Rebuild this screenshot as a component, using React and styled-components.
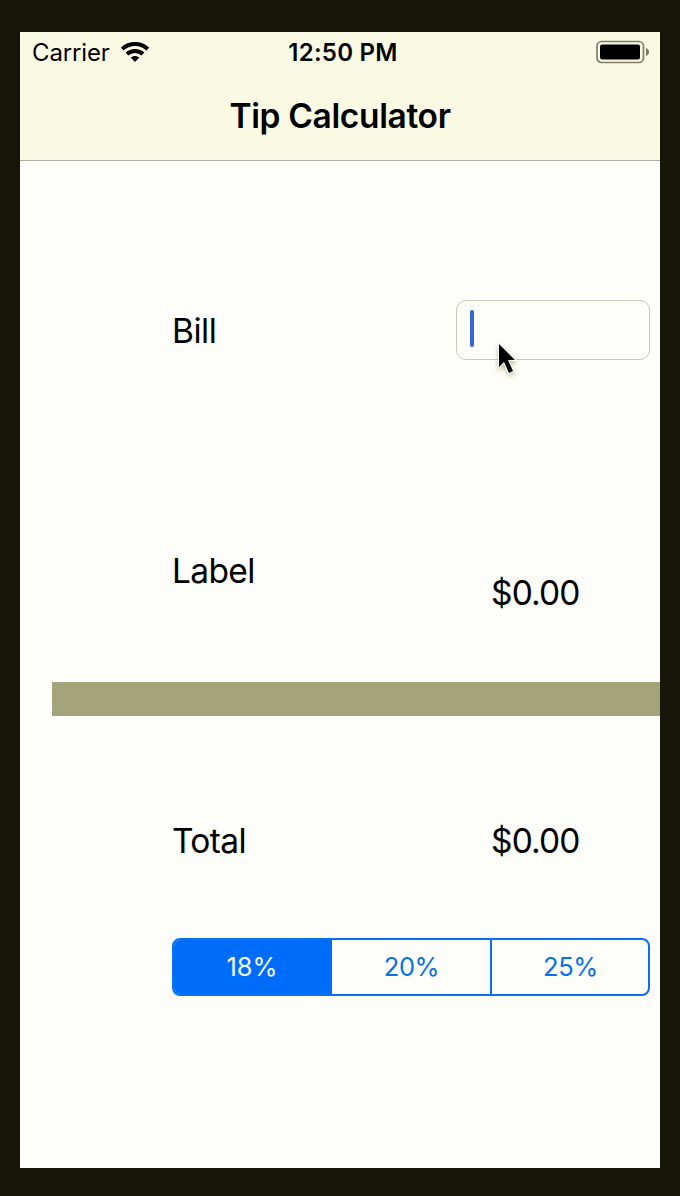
import React from "react";
import styled, { createGlobalStyle } from "styled-components";

const GlobalStyle = createGlobalStyle`
  * { box-sizing: border-box; }
  body { margin: 0; background: #171609; font-family: Inter, "Liberation Sans", sans-serif; }
`;

const Backdrop = styled.div`
  height: 1196px;
  padding: 32px 20px 28px;
  background: #171609;
`;

const Screen = styled.main`
  display: flex;
  flex-direction: column;
  height: 1136px;
  background: #fdfdf9;
  color: #000;
  overflow: hidden;
`;

const Header = styled.header`
  height: 129px;
  flex: none;
  background: #f9f9e4;
  border-bottom: 1px solid #adada0;
`;

const StatusBar = styled.div`
  display: grid;
  grid-template-columns: 1fr auto 1fr;
  align-items: center;
  height: 40px;
  padding: 0 10px 0 12px;
  font-size: 24px;
  line-height: 40px;
`;

const Carrier = styled.div`
  display: flex;
  align-items: center;
  gap: 11px;
`;

const Fit = styled.span`
  display: block;
  white-space: nowrap;
  letter-spacing: ${(p) => p.$spacing || 0}px;
`;

const StatusText = styled(Fit)`
  line-height: 38px;
  padding-top: 2px;
`;

const Clock = styled(StatusText)`
  font-weight: 600;
  padding-left: 4px;
`;

const Battery = styled.svg`
  justify-self: end;
  display: block;
`;

const Title = styled.h1`
  margin: 0;
  padding-top: 23px;
  text-align: center;
  font-size: 33.5px;
  line-height: 43px;
  font-weight: 600;
  letter-spacing: -0.35px;
`;

const Row = styled.div`
  display: grid;
  grid-template-columns: ${(p) => p.$left || 319}px 1fr;
  align-items: start;
  padding: 0 10px 0 152px;
  margin-top: ${(p) => p.$top}px;
  height: 60px;
  flex: none;
  font-size: 33.5px;
  line-height: 62px;
`;

const Amount = styled(Fit)`
  padding-top: ${(p) => p.$drop || 0}px;
`;

const BillField = styled.div`
  position: relative;
  height: 60px;
  padding: 9px 13px;
  border: 1px solid #c9c9b6;
  border-radius: 10px;
`;

const Caret = styled.div`
  width: 4px;
  height: 37px;
  border-radius: 2px;
  background: #3565d9;
`;

const Pointer = styled.svg`
  position: absolute;
  left: 38px;
  top: 40px;
  filter: drop-shadow(0 2px 2px rgba(110, 110, 20, 0.45));
`;

const Divider = styled.div`
  flex: none;
  height: 34px;
  margin: 82px 0 0 32px;
  background: #a3a37c;
`;

const Segments = styled.div`
  display: grid;
  grid-template-columns: 158px 158px 1fr;
  flex: none;
  height: 58px;
  margin: 68px 10px 0 152px;
  border: 2px solid #0a70f2;
  border-radius: 8px;
  overflow: hidden;
`;

const Segment = styled.button`
  border: 0;
  border-left: ${(p) => (p.$divided ? "2px solid #0a70f2" : "0")};
  padding: ${(p) => (p.$active ? "0 2px 0 0" : "0 0 0 1px")};
  background: ${(p) => (p.$active ? "#006dfa" : "transparent")};
  color: ${(p) => (p.$active ? "#f4f8f2" : "#0a70e8")};
  font: 400 25.5px/54px Inter, "Liberation Sans", sans-serif;
  letter-spacing: ${(p) => (p.$active ? 0 : -0.4)}px;
`;

export default function App() {
  return (
    <Backdrop>
      <GlobalStyle />
      <Screen>
        <Header>
          <StatusBar>
            <Carrier>
              <StatusText $spacing={-0.15}>Carrier</StatusText>
              <svg width="28" height="20" viewBox="0 0 28 20">
                <g fill="none" stroke="#000" strokeWidth="4">
                  <path d="M1.2 7.1C8.4 0.3 19.6 0.3 26.8 7.1" />
                  <path d="M6 12C10.5 7.9 17.5 7.9 22 12" />
                </g>
                <path d="M9.7 15.6C12.2 13.4 15.8 13.4 18.3 15.6L14 20Z" />
              </svg>
            </Carrier>
            <Clock $spacing={0.25}>12:50 PM</Clock>
            <Battery width="54" height="24" viewBox="0 0 54 24">
              <rect x="1" y="1.5" width="46.5" height="21" rx="4.5" fill="none" stroke="#7f7f68" strokeWidth="1.7" />
              <rect x="4" y="4.5" width="40" height="15" rx="2" />
              <path d="M50 8C54 9.5 54 14.5 50 16Z" fill="#777765" />
            </Battery>
          </StatusBar>
          <Title>Tip Calculator</Title>
        </Header>
        <Row $top={139} $left={284}>
          <Fit $spacing={-0.5}>Bill</Fit>
          <BillField>
            <Caret />
            <Pointer width="26" height="38" viewBox="0 0 26 38">
              <path d="M4 3V26L9 21L14 32L18 30L13 19H20Z" fill="#000" stroke="#fff" strokeWidth="2" paintOrder="stroke" />
            </Pointer>
          </BillField>
        </Row>
        <Row $top={180}>
          <Fit $spacing={-0.65}>Label</Fit>
          <Amount $spacing={-0.85} $drop={22}>$0.00</Amount>
        </Row>
        <Divider />
        <Row $top={94}>
          <Fit $spacing={-0.65}>Total</Fit>
          <Amount $spacing={-0.85}>$0.00</Amount>
        </Row>
        <Segments>
          <Segment $active>18%</Segment>
          <Segment>20%</Segment>
          <Segment $divided>25%</Segment>
        </Segments>
      </Screen>
    </Backdrop>
  );
}
